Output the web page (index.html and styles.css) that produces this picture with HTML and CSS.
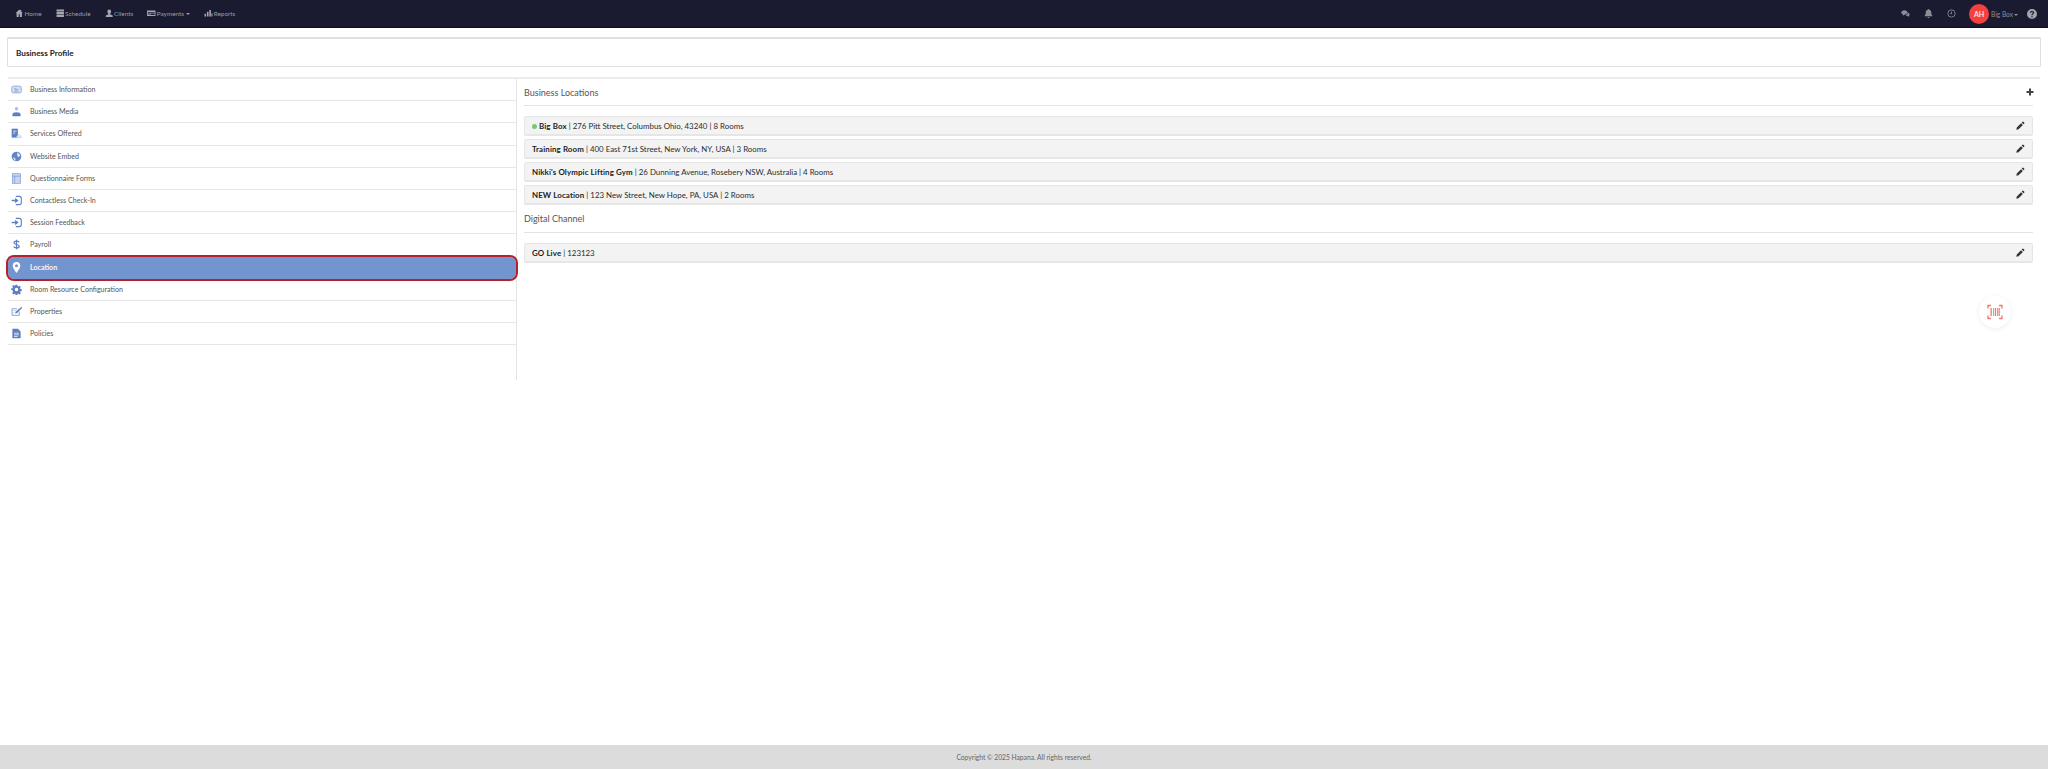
FILE: index.html
```html
<!DOCTYPE html>
<html lang="en">
<head>
<meta charset="utf-8">
<title>Business Profile</title>
<link rel="stylesheet" href="styles.css">
</head>
<body>
<svg class="sprite" width="0" height="0" aria-hidden="true">
  <symbol id="pencil" viewBox="0 0 16 16"><path d="M11.6 1.2a1 1 0 0 1 1.4 0l1.800 1.800a1 1 0 0 1 0 1.400l-1.500 1.500-3.200-3.200zM9 3.800 12.200 7l-7.700 7.700-4 .9.900-4z"/></symbol>
</svg>
<div class="page">
  <nav class="topbar">
    <div class="nav-left">
      <a class="nav-link"><svg class="nav-ico" viewBox="0 0 16 16"><path d="M8 1 1 8h2v7h4v-5h2v5h4V8h2l-3-3V2h-2v1z"/></svg>Home</a>
      <a class="nav-link"><svg class="nav-ico" viewBox="0 0 16 16"><path d="M1 1h14v3.500H1zM1 5.500h14v4H1zM1 10.500h14V15H1z"/></svg>Schedule</a>
      <a class="nav-link"><svg class="nav-ico" viewBox="0 0 16 16"><path d="M8 1a3.500 3.500 0 0 1 3.500 4c0 2-1 3.500-2 4v1l5 2v3H1.500v-3l5-2V9c-1-.5-2-2-2-4A3.500 3.500 0 0 1 8 1z"/></svg>Clients</a>
      <a class="nav-link"><svg class="nav-ico" viewBox="0 0 16 16"><path fill-rule="evenodd" d="M0 3h16v10H0zm1.500 2.500v1.500h13V5.500zm0 3v1h4v-1zm0 2v1h4v-1zm5-2v3h8v-3z"/></svg>Payments<span class="caret"></span></a>
      <a class="nav-link"><svg class="nav-ico" viewBox="0 0 16 16"><path d="M1 9h3v5H1zM5.500 5h3v9h-3zM10 2h3v12h-3zM14 8h2v6h-2z"/></svg>Reports</a>
    </div>
    <div class="nav-right">
      <svg class="top-ico" viewBox="0 0 16 16"><path d="M6 2c3 0 5.500 1.700 5.500 4s-2.500 4-5.500 4l-3 2 .5-2.500C1.800 8.800.5 7.500.5 6 .5 3.700 3 2 6 2zM12.500 6.500c1.800.5 3 1.700 3 3 0 1-.6 1.900-1.500 2.500l.5 2-2.500-1.500c-1.500 0-3-.5-3.800-1.500 2.500-.3 4-2.500 3.800-4.500z"/></svg>
      <svg class="top-ico" viewBox="0 0 16 16"><path d="M8 0a1.300 1.300 0 0 1 1.300 1.500C11.500 2 13 4 13 6.500c0 3 .8 4.500 2 5.500v1H1v-1c1.200-1 2-2.500 2-5.500C3 4 4.500 2 6.700 1.500A1.300 1.300 0 0 1 8 0zM6 14h4a2 2 0 0 1-4 0z"/></svg>
      <svg class="top-ico" viewBox="0 0 16 16"><path fill="none" stroke="currentColor" stroke-width="1.500" d="M8 1.500a6.500 6.500 0 1 1 0 13 6.500 6.500 0 0 1 0-13zM8 4.500V8.500H5.500"/></svg>
      <div class="account">
        <span class="avatar">AH</span>
        <span class="account-name">Big Box<span class="caret"></span></span>
      </div>
      <svg class="help" viewBox="0 0 16 16"><path fill-rule="evenodd" d="M8 0a8 8 0 1 1 0 16A8 8 0 0 1 8 0zM7 11.500v2h2v-2zM8 3C6 3 4.600 4 4.500 6h2c0-.8.600-1.200 1.500-1.200s1.500.4 1.500 1.100c0 1.300-2.500 1.400-2.500 4.100h2c0-1.800 2.600-2 2.600-4.300C11.600 4 10 3 8 3z"/></svg>
    </div>
  </nav>

  <main class="content">
    <header class="title-card"><h1>Business Profile</h1></header>

    <div class="columns">
      <ul class="side-list">
        <li class="side-item">
          <svg class="side-ico" viewBox="0 0 16 16"><rect x="1" y="3" width="14" height="10" rx="2.500" fill="#d5def2" stroke="#7d98d0"/><path fill="#6f8cc9" d="M5 6h3v1H5zM5 8h6v1H5zM5 10h5v1H5z"/></svg>
          Business Information
        </li>
        <li class="side-item">
          <svg class="side-ico" viewBox="0 0 16 16"><circle cx="8" cy="4" r="2.500" fill="#a9bce3"/><path fill="#5e7fc2" d="M3 15c-1 0-1-1-1-2 0-3 2-4 6-4s6 1 6 4c0 1 0 2-1 2z"/></svg>
          Business Media
        </li>
        <li class="side-item">
          <svg class="side-ico" viewBox="0 0 16 16"><path fill="#5e7fc2" d="M1 1h9v13H1z"/><path fill="#fff" d="M3 4h5v1H3zM3 7h3v1H3z"/><path fill="#dfe6f5" stroke="#a9bce3" stroke-width=".7" d="M8 14c0-3 2-4 3-4 2 0 4 1.500 4 4z"/></svg>
          Services Offered
        </li>
        <li class="side-item">
          <svg class="side-ico" viewBox="0 0 16 16"><circle cx="8" cy="8" r="7" fill="#6484c6"/><path fill="#dfe6f5" d="M9 2c3 1 4 3 4.500 5L11 9 9 7zM3 9l3 1 1 4c-2-.5-3.500-2.500-4-5z"/></svg>
          Website Embed
        </li>
        <li class="side-item">
          <svg class="side-ico" viewBox="0 0 16 16"><rect x="2" y="1" width="12" height="14" fill="#c9d5ef" stroke="#7d98d0"/><path fill="#7d98d0" d="M2 4h12v1H2zM5 5h1v10H5z"/></svg>
          Questionnaire Forms
        </li>
        <li class="side-item">
          <svg class="side-ico" viewBox="0 0 16 16"><path fill="none" stroke="#5e7fc2" stroke-width="1.600" d="M7 2h5a3 3 0 0 1 3 3v6a3 3 0 0 1-3 3H7"/><path fill="#5e7fc2" d="M1 7h5V4l5 4-5 4V9H1z"/></svg>
          Contactless Check-In
        </li>
        <li class="side-item">
          <svg class="side-ico" viewBox="0 0 16 16"><path fill="none" stroke="#5e7fc2" stroke-width="1.600" d="M7 2h5a3 3 0 0 1 3 3v6a3 3 0 0 1-3 3H7"/><path fill="#5e7fc2" d="M1 7h5V4l5 4-5 4V9H1z"/></svg>
          Session Feedback
        </li>
        <li class="side-item">
          <svg class="side-ico" viewBox="0 0 16 16"><path fill="none" stroke="#5e7fc2" stroke-width="1.800" d="M12 4.500C11 3.300 9.500 3 8 3 6 3 4.500 4 4.500 5.500 4.500 9 12 7 12 10.500 12 12 10 13 8 13c-1.700 0-3.200-.5-4.200-1.800M8 1v14"/></svg>
          Payroll
        </li>
        <li class="side-item is-active">
          <svg class="side-ico" viewBox="0 0 16 16"><path fill-rule="evenodd" fill="#fff" d="M8 0a5.500 5.500 0 0 1 5.500 5.500C13.500 9 8 16 8 16S2.500 9 2.500 5.500A5.500 5.500 0 0 1 8 0zm0 3.300a2.200 2.200 0 1 0 0 4.400 2.200 2.200 0 0 0 0-4.400z"/></svg>
          Location
        </li>
        <li class="side-item">
          <svg class="side-ico" viewBox="0 0 16 16"><path fill-rule="evenodd" fill="#5e7fc2" d="M6.800 1h2.400l.4 2 1.300.6 1.700-1.100 1.700 1.700-1.100 1.700.5 1.300 2 .4v2.400l-2 .4-.5 1.300 1.100 1.700-1.700 1.700-1.700-1.100-1.300.5-.4 2H6.800l-.4-2-1.300-.5-1.700 1.100-1.700-1.700 1.100-1.700L2.300 9.200l-2-.4V6.400l2-.4.5-1.300-1.100-1.700 1.700-1.700 1.700 1.100 1.300-.6zM8 5.500a2.500 2.500 0 1 0 0 5 2.500 2.500 0 0 0 0-5z"/></svg>
          Room Resource Configuration
        </li>
        <li class="side-item">
          <svg class="side-ico" viewBox="0 0 16 16"><path fill="none" stroke="#7d98d0" stroke-width="1.300" d="M12 8v5.500H1.500V4H9"/><path fill="#5e7fc2" d="M15.500 1 7 8l-1 3 3-1 7-7z"/><path fill="#9db1dd" d="M3.500 6H7v1H3.500zM3.500 9H5v1H3.500z"/></svg>
          Properties
        </li>
        <li class="side-item">
          <svg class="side-ico" viewBox="0 0 16 16"><path fill-rule="evenodd" fill="#5e7fc2" d="M2 1h8l4 4v10H2zM4.500 7v1h7V7zm0 2.500v1h7v-1zm0 2.500v1h5v-1z"/></svg>
          Policies
        </li>
      </ul>

      <section class="detail">
        <div class="section-head">
          <h2>Business Locations</h2>
          <svg class="plus" viewBox="0 0 16 16"><path d="M6 1h4v5h5v4h-5v5H6v-5H1V6h5z"/></svg>
        </div>
        <div class="loc-list">
          <div class="loc-row"><span class="loc-text"><span class="dot"></span><b>Big Box</b> | 276 Pitt Street, Columbus Ohio, 43240 | 8 Rooms</span><svg class="pencil"><use href="#pencil"/></svg></div>
          <div class="loc-row"><span class="loc-text"><b>Training Room</b> | 400 East 71st Street, New York, NY, USA | 3 Rooms</span><svg class="pencil"><use href="#pencil"/></svg></div>
          <div class="loc-row"><span class="loc-text"><b>Nikki's Olympic Lifting Gym</b> | 26 Dunning Avenue, Rosebery NSW, Australia | 4 Rooms</span><svg class="pencil"><use href="#pencil"/></svg></div>
          <div class="loc-row"><span class="loc-text"><b>NEW Location</b> | 123 New Street, New Hope, PA, USA | 2 Rooms</span><svg class="pencil"><use href="#pencil"/></svg></div>
        </div>
        <div class="section-head section-head-second">
          <h2>Digital Channel</h2>
        </div>
        <div class="loc-list">
          <div class="loc-row"><span class="loc-text"><b>GO Live</b> | 123123</span><svg class="pencil"><use href="#pencil"/></svg></div>
        </div>
      </section>
    </div>
  </main>

  <button class="scan-fab" aria-label="Scan">
    <svg viewBox="0 0 16 16"><path fill="none" stroke="#f0786c" stroke-width="1.300" d="M1 4.500V1.500h3M12 1.500h3v3M15 11.500v3h-3M4 14.500H1v-3"/><path fill="#f0786c" d="M3.500 4h1.300v8H3.500zM6 4h.8v8H6zM7.800 4h1.300v8H7.800zM10 4h.8v8H10zM11.500 4h1.200v8h-1.200z"/></svg>
  </button>

  <footer class="footer">Copyright © 2025 Hapana. All rights reserved.</footer>
</div>
</body>
</html>
```
FILE: styles.css
```css
* { box-sizing: border-box; }
html, body { margin: 0; height: 100%; }
body { font-family: "Lato", "Liberation Sans", sans-serif; color: #333; background: #fff; }
.sprite { position: absolute; }
.page { height: 769px; display: flex; flex-direction: column; position: relative; }

.topbar {
  height: 28px; flex: none; background: #1a1a30; border-bottom: 1px solid #0e0e1c;
  display: flex; align-items: center; justify-content: space-between;
  padding: 0 11px 0 15px; color: #9c9ca8; font-size: 6.400px;
}
.nav-left { display: flex; align-items: center; gap: 14px; }
.nav-link { display: flex; align-items: center; gap: 1px; color: #9c9ca8; }
.nav-ico { width: 8.500px; height: 8.500px; fill: #a5a5b0; }
.caret {
  display: inline-block; margin-left: 1px; vertical-align: middle;
  border-top: 2px solid currentColor; border-left: 2px solid transparent; border-right: 2px solid transparent;
}
.nav-right { display: flex; align-items: center; }
.top-ico { width: 9px; height: 9px; fill: #8d8d98; color: #8d8d98; margin-right: 14px; }
.account { display: flex; align-items: center; gap: 2px; margin-right: 9px; margin-left: -1px; }
.avatar {
  width: 20px; height: 20px; border-radius: 50%; background: #f54040; color: #f6e6e6;
  font-size: 7px; font-weight: 700; display: flex; align-items: center; justify-content: center;
}
.account-name { color: #8d8d98; font-size: 6.600px; }
.help { width: 10px; height: 10px; fill: #a5a5ad; }

.content { flex: 1; padding: 9px 7px 0; min-height: 0; }
.title-card {
  height: 30px; border: 1px solid #e0e0e0; border-top-width: 2px; border-radius: 1px;
  display: flex; align-items: center; padding-left: 8px;
}
.title-card h1 { margin: 0; font-size: 8.200px; font-weight: 700; color: #222; }

.columns { display: flex; margin: 10px 1px 0; height: 303px; }
.side-list {
  list-style: none; margin: 0; padding: 0; width: 509px; flex: none;
  border-top: 2px solid #ececec; border-right: 1px solid #e3e3e3;
}
.side-item {
  height: 22.200px; display: flex; align-items: center; padding-left: 3px;
  border-bottom: 1px solid #e6e6e6; font-size: 7.100px; color: #555; white-space: nowrap;
}
.side-ico { width: 11px; height: 11px; margin-right: 8px; flex: none; }
.is-active {
  background: #7295cf; color: #f2f5fb; font-weight: 700; border-radius: 6px;
  position: relative; z-index: 1; outline: 2px solid #b5202f; border-bottom: 0;
}

.detail { flex: 1; min-width: 0; padding: 0 7px; border-top: 2px solid #ececec; }
.section-head {
  height: 27px; display: flex; align-items: center; justify-content: space-between;
  border-bottom: 1px solid #e3e3e3; margin-bottom: 10px;
}
.section-head h2 { margin: 0; font-size: 9px; font-weight: 400; color: #555; }
.section-head-second { height: 26px; margin-top: 2px; padding-bottom: 2px; }
.plus { width: 8px; height: 8px; fill: #444; margin-right: -1px; }
.loc-list { display: flex; flex-direction: column; gap: 3px; }
.loc-row {
  height: 20px; background: #f3f3f3; border: 1px solid #e6e6e6; border-bottom-width: 2px; border-radius: 2px;
  display: flex; align-items: center; justify-content: space-between; padding: 0 7px;
  font-size: 7.900px; color: #2c2c2c;
}
.loc-row b { color: #1c1c1c; letter-spacing: .12px; }
.dot { display: inline-block; width: 5px; height: 5px; border-radius: 50%; background: #7cc576; margin-right: 2px; }
.pencil { width: 9px; height: 9px; fill: #333; }

.scan-fab {
  position: absolute; left: 1979px; top: 296px; width: 32px; height: 32px; padding: 8px; border: 0;
  border-radius: 50%; background: #fff; box-shadow: 0 1px 5px rgba(0,0,0,.08);
}
.scan-fab svg { display: block; width: 16px; height: 16px; }

.footer {
  height: 24px; flex: none; background: #dcdcdc; color: #666; font-size: 6.700px;
  display: flex; align-items: center; justify-content: center;
}
```
